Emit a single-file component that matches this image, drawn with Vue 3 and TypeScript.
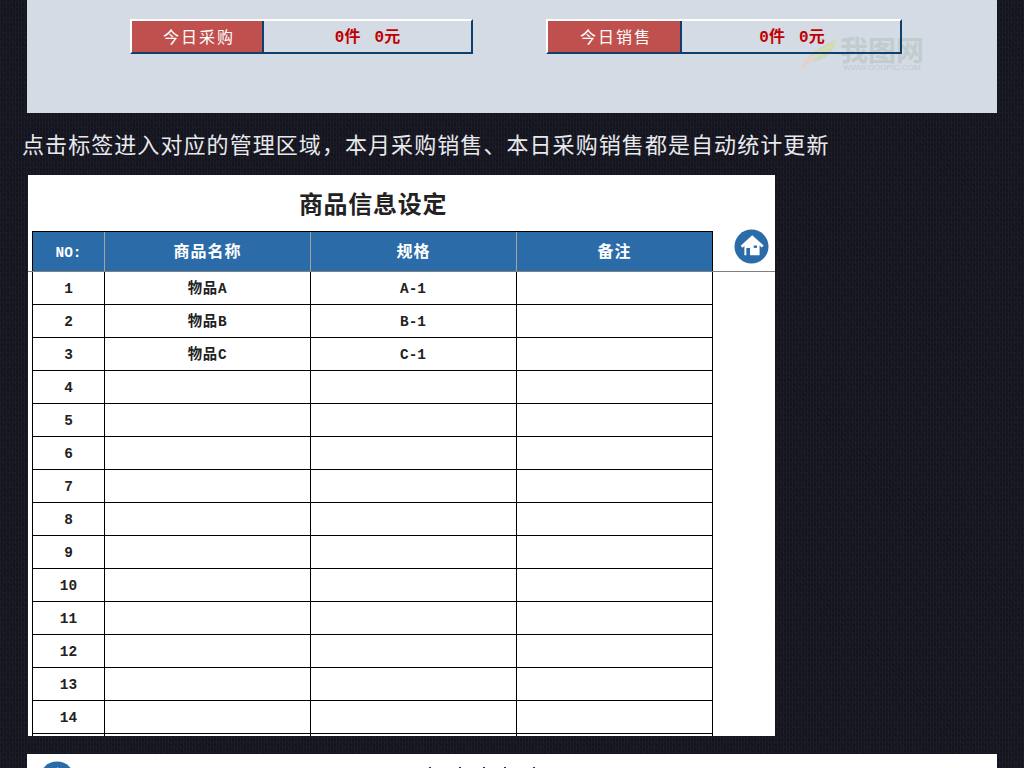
<script setup lang="ts">
interface Stat { label: string; value: string; kind: string }
interface Row { id: number; no: string; name: string; spec: string }

const stats: Stat[] = [
  { label: '今日采购', value: '0件  0元', kind: 'buy' },
  { label: '今日销售', value: '0件  0元', kind: 'sell' },
]
const named = [
  { name: '物品A', spec: 'A-1' },
  { name: '物品B', spec: 'B-1' },
  { name: '物品C', spec: 'C-1' },
]
const rows: Row[] = Array.from({ length: 15 }, (_, i) => ({
  id: i + 1,
  no: i < 14 ? String(i + 1) : '',
  name: named[i]?.name ?? '',
  spec: named[i]?.spec ?? '',
}))
const heads = ['NO:', '商品名称', '规格', '备注']
const housePath = 'M18.7 6.3 L30.5 17 L28.6 19 L26.3 17 V27 H16.5 V19.5 H12.7 V27 H10.7 V17.6 L8.7 19.4 L6.9 17.2 Z'
</script>

<template>
  <div class="page">
    <section class="panel">
      <div v-for="s in stats" :key="s.label" class="stat" :class="s.kind">
        <div class="stat-label">{{ s.label }}</div>
        <div class="stat-value">{{ s.value }}</div>
      </div>
      <div class="watermark">
        <svg class="leaf" width="40" height="32" viewBox="0 0 40 32">
          <path d="M3 30 C7 16 20 10 38 1 C34 16 24 25 9 23 Z" fill="#c9d9bb" />
          <path d="M2 31 C3 22 12 15 24 15 C18 21 10 25 2 31 Z" fill="#e0d3c8" />
          <path d="M12 17 C20 12 30 8 38 1 C34 10 28 15 20 17 Z" fill="#d5dcb0" />
        </svg>
        <div class="mark-words">
          <div class="mark-cn">我图网</div>
          <div class="mark-en">WWW.OOOPIC.COM</div>
        </div>
      </div>
    </section>

    <p class="note">点击标签进入对应的管理区域，本月采购销售、本日采购销售都是自动统计更新</p>

    <section class="sheet">
      <h1 class="title">商品信息设定</h1>
      <div class="head-row">
        <div class="grid head">
          <div v-for="h in heads" :key="h" class="cell">{{ h }}</div>
        </div>
        <svg class="home" width="35" height="35" viewBox="0 0 36 36">
          <circle cx="18" cy="18" r="17.5" fill="#2b6ca8" />
          <path :d="housePath" fill="#fff" />
          <rect x="20.3" y="17" width="3.4" height="2.4" fill="#2b6ca8" />
        </svg>
      </div>
      <div v-for="r in rows" :key="r.id" class="grid row">
        <div class="cell">{{ r.no }}</div>
        <div class="cell">{{ r.name }}</div>
        <div class="cell">{{ r.spec }}</div>
        <div class="cell"></div>
      </div>
    </section>

    <section class="next">
      <svg class="next-home" width="36" height="36" viewBox="0 0 36 36">
        <circle cx="18" cy="18" r="17.5" fill="#2b6ca8" />
        <path :d="housePath" fill="#fff" />
      </svg>
      <div class="specks">
        <i class="s1"></i><i class="s2"></i><i class="s3"></i><i class="s4"></i><i class="s5"></i>
      </div>
    </section>
  </div>
</template>

<style scoped>
.page {
  width: 1024px;
  height: 768px;
  overflow: hidden;
  display: flex;
  flex-direction: column;
  font-family: "Liberation Mono", "Noto Sans CJK SC", monospace;
  background-color: #161620;
  background-image:
    repeating-linear-gradient(90deg, rgba(50, 52, 72, 0.2) 0 1px, rgba(0, 0, 0, 0) 1px 3px),
    repeating-linear-gradient(45deg, rgba(0, 0, 0, 0.16) 0 1px, rgba(0, 0, 0, 0) 1px 4px),
    repeating-linear-gradient(0deg, rgba(60, 60, 80, 0.1) 0 1px, rgba(0, 0, 0, 0) 1px 5px);
}
.panel {
  position: relative;
  flex: none;
  box-sizing: border-box;
  width: 970px;
  height: 113px;
  margin-left: 27px;
  padding: 19px 0 0 103px;
  display: flex;
  align-items: flex-start;
  gap: 73px;
  background: #d5dbe4;
}
.stat {
  position: relative;
  z-index: 1;
  box-sizing: border-box;
  height: 35px;
  display: flex;
  border-style: solid;
  border-width: 2px;
  border-color: #fff #0f3f6e #0f3f6e #fff;
  font-size: 16px;
}
.buy { width: 343px; }
.sell { width: 356px; }
.stat-label {
  flex: none;
  box-sizing: border-box;
  padding-left: 4px;
  background: #c0504d;
  color: #fff;
  text-align: center;
  line-height: 31px;
  letter-spacing: 2px;
  font-family: "Noto Sans CJK SC", sans-serif;
}
.buy .stat-label { width: 130px; }
.sell .stat-label { width: 132px; }
.stat-value {
  flex: 1;
  height: 31px;
  border-left: 2px solid #0f3f6e;
  color: #c00000;
  text-align: center;
  line-height: 35px;
  white-space: pre;
  font-size: 16px;
  font-weight: 700;
  word-spacing: -2.5px;
}
.sell .stat-value { padding-left: 2px; }
.watermark {
  position: absolute;
  left: 772px;
  top: 36px;
  display: flex;
  gap: 1px;
}
.leaf { margin-top: 2px; }
.mark-words {
  font-family: "Noto Sans CJK SC", sans-serif;
  text-align: center;
}
.mark-cn {
  font-size: 28px;
  line-height: 26px;
  font-weight: 700;
  color: #c0ccce;
  width: 84px;
  white-space: nowrap;
}
.mark-en {
  margin-top: 1px;
  font-family: "Liberation Sans", sans-serif;
  font-size: 8px;
  line-height: 9px;
  color: #c0c8d1;
  white-space: nowrap;
}
.note {
  flex: none;
  box-sizing: border-box;
  height: 62px;
  margin: 0;
  padding: 14px 0 0 22px;
  color: #e8e9ec;
  font-family: "Noto Sans CJK SC", sans-serif;
  font-size: 22px;
  line-height: 32px;
  letter-spacing: 1.07px;
  white-space: nowrap;
}
.sheet {
  flex: none;
  box-sizing: border-box;
  width: 747px;
  height: 561px;
  margin-left: 28px;
  overflow: hidden;
  background: #fff;
}
.title {
  box-sizing: border-box;
  width: 690px;
  height: 56px;
  margin: 0;
  text-align: center;
  font-family: "Noto Sans CJK SC", sans-serif;
  font-size: 24px;
  font-weight: 700;
  line-height: 56px;
  letter-spacing: 0.7px;
  color: #222;
}
.head-row {
  box-sizing: border-box;
  height: 41px;
  padding-left: 4px;
  display: flex;
  align-items: flex-start;
  border-bottom: 1px solid #808080;
}
.grid {
  display: grid;
  grid-template-columns: 73px 206px 206px 196px;
  width: 681px;
  box-sizing: border-box;
}
.head {
  flex: none;
  height: 40px;
  border-top: 1px solid #000;
  background: #2b6ca8;
  color: #fff;
  font-weight: 700;
}
.cell {
  box-sizing: border-box;
  text-align: center;
  border-right: 1px solid #000;
}
.head .cell {
  height: 39px;
  border-right: 1px solid #a3a39b;
  font-size: 16px;
  letter-spacing: 1px;
  line-height: 43px;
}
.head .cell:first-child {
  border-left: 1px solid #000;
  font-size: 14.4px;
  letter-spacing: 0;
}
.head .cell:last-child { border-right: 1px solid #000; }
.home {
  flex: none;
  margin: -2px 0 0 21px;
}
.row {
  margin-left: 4px;
  height: 33px;
  border-bottom: 1px solid #000;
  color: #222;
  font-size: 14.4px;
  font-weight: 700;
}
.row .cell {
  height: 32px;
  line-height: 34px;
}
.row .cell:first-child { border-left: 1px solid #000; }
.row .cell:nth-child(2) { letter-spacing: 0.7px; }
.row .cell:nth-child(3) { padding-right: 1px; }
.next {
  flex: none;
  box-sizing: border-box;
  width: 970px;
  height: 14px;
  margin: 18px 0 0 27px;
  padding: 7px 0 0 12px;
  overflow: hidden;
  display: flex;
  align-items: flex-start;
  background: #fff;
}
.next-home { flex: none; }
.specks {
  position: relative;
  margin-left: 354px;
  width: 120px;
  height: 7px;
}
.specks i {
  position: absolute;
  top: 6px;
  width: 2px;
  height: 1px;
  background: #333;
}
.s1 { left: 0; }
.s2 { left: 30px; }
.s3 { left: 54px; }
.s4 { left: 75px; }
.s5 { left: 104px; }
</style>

<style>
html, body {
  margin: 0;
  background: #161620;
}
</style>
